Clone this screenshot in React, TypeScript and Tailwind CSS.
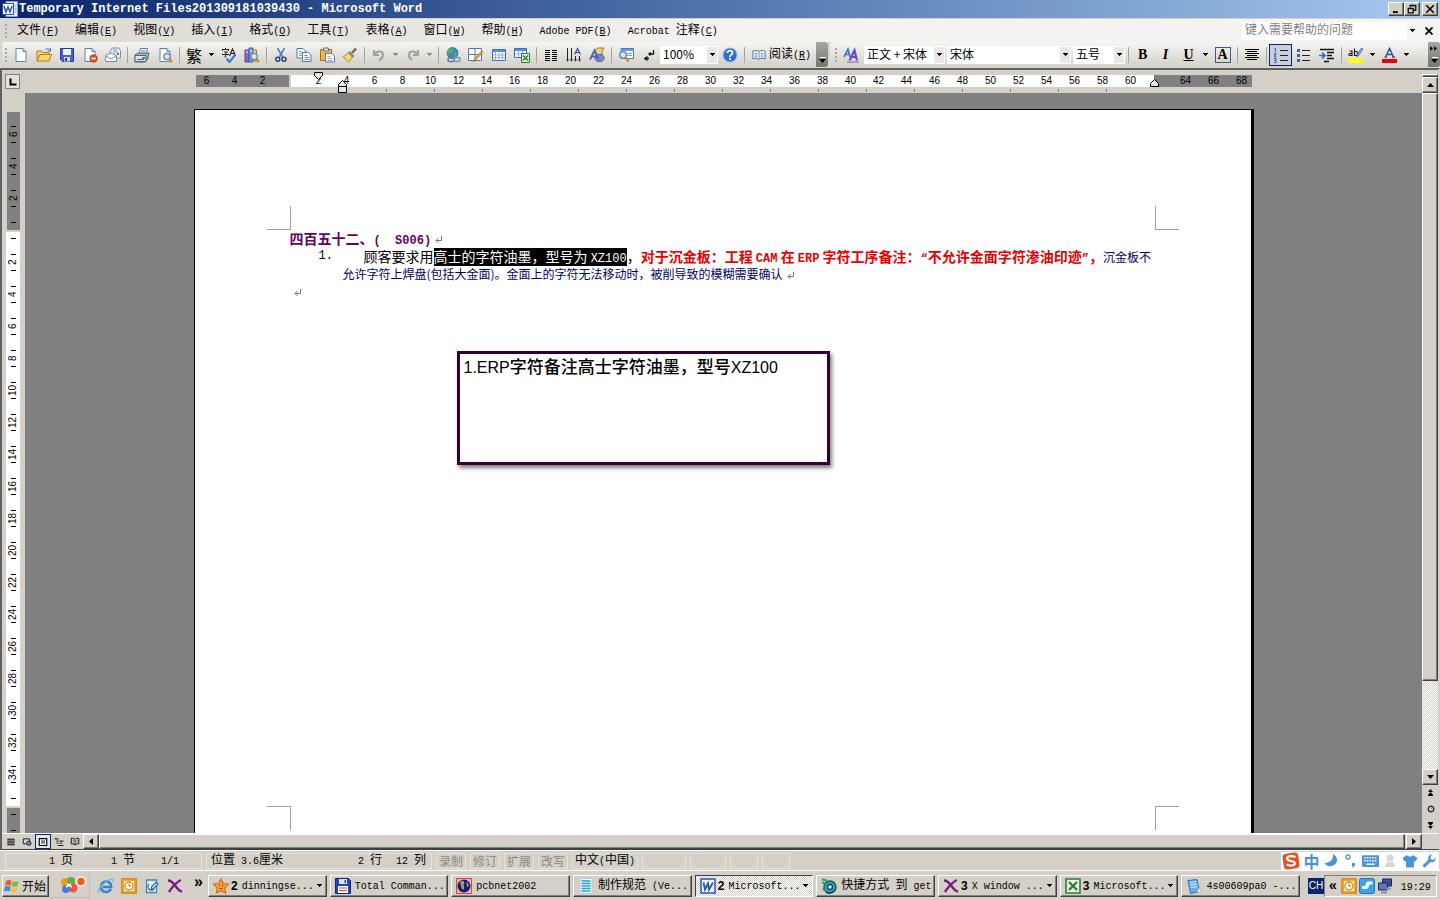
import { Fragment, type ReactNode } from "react";
import clsx from "clsx";

const song = "font-['Noto_Sans_CJK_SC',sans-serif]";
const raised =
  "border border-t-white border-l-white border-r-[#404040] border-b-[#404040] bg-[#d4d0c8] shadow-[inset_-1px_-1px_#808080]";
const dither = "bg-[repeating-conic-gradient(#fff_0_25%,#d4d0c8_0_50%)] bg-[length:2px_2px]";

// Latin runs are half the width of a full CJK glyph, so they get their own size.
function Mix({ children }: { children: string }) {
  return (
    <span>
      {children.split(/([ -~]+)/).map((part, i) =>
        i % 2 ? (
          <span key={i} className="whitespace-pre font-['Liberation_Mono',monospace] text-[10px]">
            {part}
          </span>
        ) : (
          <Fragment key={i}>{part}</Fragment>
        ),
      )}
    </span>
  );
}

function Key({ letter }: { letter: string }) {
  return (
    <span className="font-['Liberation_Mono',monospace] text-[10px]">
      (<u>{letter}</u>)
    </span>
  );
}

function Svg({ children, size = "size-4" }: { children: ReactNode; size?: string }) {
  return (
    <svg viewBox="0 0 16 16" className={clsx("shrink-0", size)} fill="none" aria-hidden="true">
      {children}
    </svg>
  );
}

function Caret({ color = "#000" }: { color?: string }) {
  return (
    <svg viewBox="0 0 5 3" className="h-[3px] w-[5px] shrink-0" shapeRendering="crispEdges" aria-hidden="true">
      <path d="M0 0h5v1h-1v1h-1v1h-1v-1h-1v-1h-1z" fill={color} />
    </svg>
  );
}

const sheet = <path d="M3 1.500h7l3 3v10H3z" fill="#fff" stroke="#5d7fb5" />;
const fold = <path d="M10 1.500v3h3" fill="#c5d6f0" stroke="#5d7fb5" />;
const glass = (
  <>
    <circle cx="10" cy="9.500" r="3.200" fill="#cfe6fa" stroke="#6a86a8" strokeWidth="1.300" />
    <path d="M12.300 12l2.700 3" stroke="#c98a2b" strokeWidth="2.200" />
  </>
);
const outlookClock = (
  <>
    <rect x=".8" y=".8" width="14.400" height="14.400" fill="#f7a823" stroke="#c9780c" />
    <rect x="3" y="3" width="10" height="10" fill="#fff4d8" />
    <circle cx="8" cy="8" r="4" fill="#fff" stroke="#d98b1a" strokeWidth="1.400" />
    <path d="M8 5.500V8h2" stroke="#a0600a" />
  </>
);
const bigX = (
  <path d="M1 2.500c3 0 5 2 7.500 5.500S13 13.500 15 13.500M14 2C11 3 4 10 2 14" stroke="#7b1a7e" strokeWidth="2.300" />
);

const icons: Record<string, ReactNode> = {
  new: <>{sheet}{fold}</>,
  open: (
    <>
      <path d="M1 14V4h5l1 1.500h6V8" fill="#f6d57a" stroke="#b07c18" />
      <path d="M1 14l3-6.500h11.500L13 14z" fill="#fbd768" stroke="#b07c18" />
      <path d="M9 3c2-2 4-1.500 5 .5M14.500 1v3h-3" stroke="#3f6fae" />
    </>
  ),
  save: (
    <>
      <path d="M1.500 1.500h13v13h-11l-2-2z" fill="#4a62c9" stroke="#2a3a92" />
      <path d="M4 2h8v6H4z" fill="#eef3fd" />
      <path d="M5 10h6v4.500H5z" fill="#cfd6e8" />
      <path d="M6 11h2v3H6z" fill="#2a3a92" />
    </>
  ),
  permission: (
    <>
      {sheet}
      {fold}
      <circle cx="11.500" cy="11.500" r="3.800" fill="#df4a22" stroke="#a82c0c" strokeWidth=".6" />
      <path d="M9.300 11.500h4.400" stroke="#fff" strokeWidth="1.600" />
    </>
  ),
  mail: (
    <>
      <path d="M5 5l2-4h7l1.500 3v7H5z" fill="#eaf2fc" stroke="#7b93b8" />
      <path d="M8 3h4M8 5h5" stroke="#7b93b8" />
      <path d="M.7 8.500L6 6l5.500 2.500v6H.7z" fill="#fff" stroke="#6f87ab" />
      <path d="M1 9l5 3 5-3" stroke="#6f87ab" />
      <path d="M12 6h2v2h-2z" fill="#d04a30" />
    </>
  ),
  print: (
    <>
      <path d="M5 7l1.500-5.500h7L12 7z" fill="#fff" stroke="#5f7b9e" />
      <path d="M7.500 3.500h4M7 5h4" stroke="#89a4c8" />
      <path d="M1 8l3-2h11l-1.500 6.500L11 15H1z" fill="#a9b6c9" stroke="#50627c" />
      <path d="M1 8.500h11v6H1z" fill="#dfe6ef" stroke="#50627c" />
      <path d="M3 12.500h7" stroke="#50627c" />
      <path d="M8 10h3v2H8z" fill="#2fb52a" />
    </>
  ),
  preview: <>{sheet}{fold}{glass}</>,
  spelling: (
    <>
      <path d="M1 2.500h7M4.500 1v2M1.500 2.500v1.500M7.500 2.500v1.500M3 5h3.500L4.500 6.500M1 7.500h7M4.700 6.500v3.500H3.500" stroke="#222" />
      <path d="M8.500 9l3-7 3 7M9.500 6.500h4" stroke="#222" strokeWidth="1.100" />
      <path d="M5.500 11.500l3 3.500 5.500-7" stroke="#3f7bd9" strokeWidth="2.200" />
    </>
  ),
  research: (
    <>
      <path d="M1 3h4v12H1z" fill="#8a6cc8" stroke="#5a4296" />
      <path d="M5 1h4v14H5z" fill="#6f9be0" stroke="#3f62a4" />
      <path d="M9 3h3.500v11H9z" fill="#f1cf6e" stroke="#a37c22" />
      <path d="M2 5h2M6 4h2" stroke="#fff" />
      {glass}
    </>
  ),
  cut: (
    <>
      <path d="M4.500 1l5 9M11.500 1l-5 9" stroke="#5b7fb8" strokeWidth="1.600" />
      <circle cx="4.800" cy="12.300" r="2" stroke="#24447e" strokeWidth="1.500" />
      <circle cx="11" cy="12.300" r="2" stroke="#24447e" strokeWidth="1.500" />
    </>
  ),
  copy: (
    <>
      <path d="M1 1.500h6l2.500 2.500v7H1z" fill="#fff" stroke="#4d74b8" />
      <path d="M3 4.500h3M3 6.500h4M3 8.500h3" stroke="#7fa0d4" />
      <path d="M6.500 5.500h6L15 8v6.500H6.500z" fill="#fff" stroke="#4d74b8" />
      <path d="M8.500 8.500h3M8.500 10.500h5M8.500 12.500h5" stroke="#5d87cc" />
    </>
  ),
  paste: (
    <>
      <path d="M1.500 2.500h11v11h-11z" fill="#f0b840" stroke="#a87214" />
      <path d="M4.500 1h5v3h-5z" fill="#d9dde5" stroke="#6a7384" />
      <path d="M6.500 6.500H13L15.500 9v6h-9z" fill="#fff" stroke="#5a78ab" />
      <path d="M8.500 9.500h3M8.500 11.500h5M8.500 13.500h5" stroke="#8fa9d4" />
    </>
  ),
  brush: (
    <>
      <path d="M10 6l4-4.500" stroke="#8c6a33" strokeWidth="2.600" />
      <path d="M7.500 4l5 5-2 1.500L6 5.500z" fill="#7d83a5" />
      <path d="M6 5.500l4.500 5L6.500 15 1 9.500c2-.5 4-2 5-4z" fill="#f5db70" stroke="#a88a28" />
    </>
  ),
  undo: <path d="M3 3v5h5M3.500 7.500C6 3.500 12 3.500 12 8c0 2.500-1.500 4-4 5.500" stroke="#a3a09a" strokeWidth="2.100" />,
  redo: <path d="M13 3v5H8M12.500 7.500C10 3.500 4 3.500 4 8c0 2.500 1.500 4 3 4.500" stroke="#a3a09a" strokeWidth="2.100" />,
  link: (
    <>
      <circle cx="7.500" cy="6" r="5.500" fill="#3f86d8" stroke="#245494" strokeWidth=".7" />
      <path d="M4 2c3-1 5 0 4 2s-4 1-4 4-2-1-2-3 1-2 2-3zM10 5c2 0 2 2 1 4s-2-3-1-4z" fill="#52b948" />
      <rect x="3" y="10.500" width="6.500" height="4" rx="2" stroke="#5b7697" strokeWidth="1.500" />
      <rect x="8.500" y="10.500" width="6.500" height="4" rx="2" stroke="#7d98b9" strokeWidth="1.500" />
    </>
  ),
  tableDraw: (
    <>
      <path d="M.5 1.500h13v12H.5zM.5 7.500h13M7 1.500v12" fill="#fff" stroke="#5874b6" />
      <path d="M15 5l-7 8-2 2 .5-3L13.500 4z" fill="#f2b13a" stroke="#946114" strokeWidth=".7" />
    </>
  ),
  table: (
    <>
      <path d="M1.500 2.500h13v11h-13z" fill="#fff" stroke="#3f6cbd" />
      <path d="M2 3h12v2H2z" fill="#5c8de0" />
      <path d="M2 8h12M2 10.700h12M4.500 5v8.500M8 5v8.500M11.300 5v8.500" stroke="#8fb0e6" />
    </>
  ),
  excelSheet: (
    <>
      <path d="M.5 1.500h12v9H.5z" fill="#fff" stroke="#3f6cbd" />
      <path d="M1 2h11v2H1z" fill="#5c8de0" />
      <path d="M1 7h11M4.500 4v6M8.500 4v6" stroke="#8fb0e6" />
      <path d="M7.500 6.500h8v9h-8z" fill="#e6f5e4" stroke="#2b7a2b" />
      <path d="M9 8.500l5 5M14 8.500l-5 5" stroke="#2b8a2b" strokeWidth="1.700" />
    </>
  ),
  columns: <path d="M2 3.500h5M2 5.500h5M2 7.500h5M2 9.500h5M2 11.500h5M2 13.500h5M9 3.500h5M9 5.500h5M9 7.500h5M9 9.500h5M9 11.500h5M9 13.500h5" stroke="#000" />,
  direction: (
    <>
      <path d="M1.500 1v13M5.500 1v13M9.500 9v5M13.500 9v5" stroke="#222" />
      <path d="M8.500 7.500l3-6 3 6M9.500 5.500h4" stroke="#333a9a" strokeWidth="1.100" />
      <path d="M0 12l1.500 2.500L3 12M4 12l1.500 2.500L7 12M8 12l1.500 2.500L11 12M12 12l1.500 2.500L15 12" stroke="#555" strokeWidth=".7" />
    </>
  ),
  drawing: (
    <>
      <path d="M6 3l3-2h6l-2 3v6l-3 2z" fill="#f0d27a" stroke="#9c7c2a" />
      <ellipse cx="10.500" cy="11" rx="4.500" ry="3.500" fill="#7c8cc8" stroke="#4a5896" />
      <path d="M1 12.500l4.500-9 4 9M2.500 9.500h6" stroke="#4f62c4" strokeWidth="2" />
    </>
  ),
  docMap: (
    <>
      <path d="M3 1.500h12.500v10H3z" fill="#fff" stroke="#4d77bd" />
      <path d="M3 2h12.500v2H3z" fill="#6f9be0" />
      <path d="M9 6.500h5M9 8.500h5" stroke="#6f9be0" />
      <circle cx="5" cy="8" r="3.300" fill="#cfe6fa" stroke="#5b7fae" strokeWidth="1.300" />
      <path d="M7.500 10.500l3 4" stroke="#c98a2b" strokeWidth="2.200" />
    </>
  ),
  marks: <path d="M12.500 3v4H8M9.500 5.500L8 7l1.500 1.500M3 11.500h5M6.500 9.500L4 11.500l2.500 2" stroke="#111" strokeWidth="1.300" />,
  help: (
    <>
      <circle cx="8" cy="8" r="7" fill="#2c6fd8" stroke="#8fb6ee" />
      <path d="M5.500 6c0-3.500 5.200-3 5 0-.2 1.700-2.500 1.800-2.500 4M8 11v2" stroke="#fff" strokeWidth="1.800" />
    </>
  ),
  read: (
    <>
      <path d="M8 4C6 2.500 3 2.500 1 3.500v9c2-1 5-1 7 .5 2-1.500 5-1.500 7-.5v-9c-2-1-5-1-7 .5z" fill="#eef4fc" stroke="#47678f" />
      <path d="M8 4v9M3 6h3M3 8h3M3 10h3M10 6h3M10 8h3M10 10h3" stroke="#6d8fbd" />
    </>
  ),
  styles: (
    <>
      <path d="M1 10l4-8 2 8M2.500 7.500h4" stroke="#3c7bc4" strokeWidth="1.700" />
      <path d="M6.500 13.500l5-10 2.500 10M8.500 10h5" stroke="#6a4cc0" strokeWidth="2.200" />
      <path d="M4 15h12" stroke="#7c5cd0" />
    </>
  ),
  center: <path d="M1 2.500h14M3 4.500h10M1 6.500h14M3 8.500h10M1 10.500h14M3 12.500h10" stroke="#000" />,
  numbered: (
    <>
      <path d="M7 3.500h8M7 8.500h8M7 13.500h8" stroke="#222" />
      <path d="M1.500 1.500h1v3.500M1 6.500h2v1.500H1.500v2h2M1 11.500h2v4H1M1.500 13.500H3" stroke="#3a5dae" />
    </>
  ),
  bullets: (
    <>
      <path d="M6 3.500h8M6 8.500h8M6 13.500h8" stroke="#222" />
      <path d="M1 2h3v3H1zM1 7h3v3H1zM1 12h3v3H1z" fill="#3a5dae" />
    </>
  ),
  indent: (
    <>
      <path d="M1 2.500h14M8 5.500h7M8 8.500h5M8 11.500h7M5 14.500h5" stroke="#111" strokeWidth="1.300" />
      <path d="M0 8.500h5M3 5.500l3 3-3 3" stroke="#2f65c4" strokeWidth="1.700" />
    </>
  ),
  highlight: (
    <>
      <path d="M1.500 4h2.500v4.500H2c-1.500 0-1.500-2 0-2h2M6.500 1.500v7h2c1.500-.5 1.500-4-.5-4H6.500" stroke="#111" strokeWidth="1.100" />
      <path d="M15 2l-4 6-2 2 .5-3L13 1.500z" fill="#8ab0ea" stroke="#3d5f9c" strokeWidth=".8" />
      <path d="M0 11.500h15V16H0z" fill="#ffff00" />
    </>
  ),
  fontColor: (
    <>
      <path d="M3.500 10l4-8.500 4 8.500M5 7.500h5M2.500 10h2.500M10 10h3" stroke="#30539c" strokeWidth="1.500" />
      <path d="M0 12h15v4H0z" fill="#f00000" />
    </>
  ),
  word: (
    <>
      <path d="M4 .5h11.500v15H4z" fill="#eaf1fc" stroke="#7f9fd6" />
      <path d="M.5 2.500h11v11H.5z" fill="#fff" stroke="#2a54ac" strokeWidth="1.200" />
      <path d="M2 5l2 6 2-5 2 5 2-6" stroke="#2a54ac" strokeWidth="1.500" />
      <path d="M13 5h1.500M13 8h1.500M13 11h1.500" stroke="#5d87cc" />
    </>
  ),
  wordTask: (
    <>
      <path d="M1 1h14v14H1z" fill="#eef4fd" stroke="#2a54ac" strokeWidth="1.500" />
      <path d="M3.500 4.500L5 11.500l3-6 1 6 4-7" stroke="#2a54ac" strokeWidth="1.800" />
    </>
  ),
  excel: (
    <>
      <path d="M1 1h14v14H1z" fill="#e9f6e6" stroke="#2d7d2d" strokeWidth="1.600" />
      <path d="M4 4l8 8M12 4l-8 8" stroke="#2d7d2d" strokeWidth="2.300" />
    </>
  ),
  windows: (
    <>
      <path d="M2 3c2-1.300 4-1 5.500-.2L6.800 7.500C5 6.700 3 6.700 1 7.700z" fill="#ef5a28" />
      <path d="M8.500 3.200c2 1 4 .8 6-.2l-1 5c-2 .9-4 .8-5.700 0z" fill="#7cbb3c" />
      <path d="M1 8.800c2-1 3.800-1 5.600-.2L6 13.300c-2-.9-4-.7-6 .3z" fill="#3c8ae0" />
      <path d="M7.700 9.200c2 .9 3.800.9 5.600 0l-.9 4.800c-2 1-3.600.8-5.400-.1z" fill="#f9c52a" />
    </>
  ),
  ie: (
    <>
      <path d="M13 11c-1 2-2.500 3-5 3-3 0-5-2-5-5s2-5.500 5-5.500 5.500 2 5.200 5.500H5" stroke="#2b84d4" strokeWidth="2.500" />
      <path d="M1 14.500C-1 12 6 4 11 2s4 0 3.500 2" stroke="#65b4ee" strokeWidth="1.300" />
    </>
  ),
  clock: outlookClock,
  note: (
    <>
      <path d="M2.500 2h10v12.500h-10z" fill="#dff0fc" stroke="#3f86bf" strokeWidth="1.300" />
      <path d="M5 6a3.500 3.500 0 1 0 5 5M12 4.500L7.500 9v2H9l5-5z" fill="#fff" stroke="#2a6ca8" strokeWidth="1.300" />
    </>
  ),
  x: bigX,
  star: (
    <>
      <path d="M8 .8l2.300 4.700 5.200.6-3.700 3.700.9 5.300L8 12.700l-4.700 2.400.9-5.300L.5 6.100l5.200-.6z" fill="#f9a73a" stroke="#d96c10" strokeWidth="1.200" strokeLinejoin="round" />
      <path d="M6.300 6.500v2M9.700 6.500v2M6 10c1 1 3 1 4 0" stroke="#a04808" />
    </>
  ),
  floppy: (
    <>
      <path d="M.5.500h13l2 2v13H.5z" fill="#2343c4" stroke="#14256e" />
      <path d="M4 1h8v5H4z" fill="#e3e6ee" />
      <path d="M9.500 2h1.500v3H9.500z" fill="#2343c4" />
      <path d="M3 8h10v7H3z" fill="#fff" />
      <path d="M4 10h8M4 12.500h8" stroke="#d8483c" />
    </>
  ),
  globe: (
    <>
      <path d="M.5.500h15v15H.5z" fill="#e8b8b0" stroke="#d84838" />
      <circle cx="8" cy="8" r="6.500" fill="#10188c" />
      <path d="M5 3c3-1 4 1 3 3s1 3 0 5-3-1-3-3-2-3 0-5zM11 4c2 1 2 4 1 5s-2-4-1-5z" fill="#a8a048" />
    </>
  ),
  list: (
    <>
      <path d="M2 .5h12v15H2z" fill="#f2fafd" stroke="#b8d0da" />
      <path d="M3.500 3h9M3.500 5.500h9M3.500 8h9M3.500 10.500h9M3.500 13h9" stroke="#22a0cc" strokeWidth="1.300" />
    </>
  ),
  gear: (
    <>
      <circle cx="9" cy="9" r="6" fill="#35b08c" stroke="#0c5a50" strokeWidth="1.400" />
      <circle cx="9" cy="9" r="2.500" fill="#d8f0e4" stroke="#1c3c94" strokeWidth="1.400" />
      <path d="M1 1.500l5 1M1 4l3 2M4 13l-2-3" stroke="#2a9c84" strokeWidth="2" />
      <path d="M5 14c2 2 6 1 8-1" stroke="#1c3c94" strokeWidth="1.600" />
    </>
  ),
  notepad: (
    <>
      <path d="M2 2.500l9-1 2.500 12-9 2z" fill="#5fb2ea" stroke="#2a74b4" />
      <path d="M3.500 4.500l7-1M4 7l7-1M4.500 9.500l7-1" stroke="#d4ecfc" />
      <path d="M11 15l3.500-1-1-6z" fill="#f2f6fa" stroke="#8aa0b4" strokeWidth=".6" />
    </>
  ),
  flash: (
    <>
      <rect x=".5" y=".5" width="15" height="15" rx="2" fill="#3aa4e4" stroke="#1d78b8" />
      <path d="M13.500 3.500H9c-2 0-2 3-3 4.500H3v3h4c3 0 2.500-3 3.500-4.500h3z" fill="#fff" />
    </>
  ),
  network: (
    <>
      <path d="M5.500 1h9v7h-9z" fill="#3f4e9c" stroke="#1c2458" />
      <path d="M1.500 5h9v7h-9z" fill="#5f74c8" stroke="#1c2458" />
      <path d="M4 14.500h6M9 10.500h5" stroke="#8a90a8" strokeWidth="2" />
    </>
  ),
};

function ToolButton({ name, label }: { name: string; label: string }) {
  return (
    <button type="button" aria-label={label} className="flex h-[22px] w-[23px] shrink-0 items-center justify-center">
      <Svg>{icons[name]}</Svg>
    </button>
  );
}

function DropArrow({ label, color }: { label: string; color?: string }) {
  return (
    <button type="button" aria-label={label} className="flex h-[22px] w-[11px] shrink-0 items-center justify-center">
      <Caret color={color} />
    </button>
  );
}

function Separator() {
  return (
    <div className="flex w-[6px] shrink-0 justify-center">
      <div className="h-4 w-px bg-[#a6a39c]" />
    </div>
  );
}

function Grip() {
  return (
    <div className="flex w-[9px] shrink-0 flex-col items-end gap-[2px] pr-[2px]">
      {[0, 1, 2, 3].map((i) => (
        <div key={i} className="size-[2px] bg-[#a8a59d]" />
      ))}
    </div>
  );
}

function Combo({ label, value, width }: { label: string; value: string; width: string }) {
  return (
    <div className={clsx("relative flex h-[18px] shrink-0 bg-white", width)}>
      <select aria-label={label} className="w-full appearance-none bg-transparent pb-[2px] pl-[3px] text-xs leading-4 outline-none">
        <option>{value}</option>
      </select>
      <span className="pointer-events-none absolute inset-y-px right-px flex w-[10px] items-center justify-center bg-[#e9e7e3]">
        <Caret />
      </span>
    </div>
  );
}

function BarEnd({ more }: { more?: boolean }) {
  return (
    <button
      type="button"
      aria-label="工具栏选项"
      className={clsx(
        "flex h-[25px] w-3 shrink-0 flex-col items-center gap-1 rounded-r-[3px] bg-linear-to-b from-[#a9a7a2] to-[#77756f] pb-[3px] text-white",
        more ? "justify-between pt-1" : "justify-end",
      )}
    >
      {more ? (
        <svg viewBox="0 0 8 5" className="h-[5px] w-2" fill="#111" aria-hidden="true">
          <path d="M0 0l3 2.500L0 5zM4 0l3 2.500L4 5z" />
        </svg>
      ) : null}
      <svg viewBox="0 0 7 7" className="size-[7px]" aria-hidden="true">
        <path d="M1 0h6v1H1z" fill="#fff" />
        <path d="M0 2h7L3.500 6z" fill="#000" />
      </svg>
    </button>
  );
}

const menus = [
  ["文件", "F"],
  ["编辑", "E"],
  ["视图", "V"],
  ["插入", "I"],
  ["格式", "O"],
  ["工具", "T"],
  ["表格", "A"],
  ["窗口", "W"],
  ["帮助", "H"],
  ["Adobe PDF", "B"],
  ["Acrobat 注释", "C"],
];

function TitleBar() {
  const button = clsx("flex h-[14px] w-4 items-center justify-center", raised);
  return (
    <header className="flex h-[18px] shrink-0 items-center bg-linear-to-r from-[#0a246a] to-[#a6caf0] pr-[2px] pl-[2px]">
      <Svg>{icons.word}</Svg>
      <h1 className="ml-px flex-1 font-['Liberation_Mono',monospace] text-xs leading-4 font-bold whitespace-nowrap text-white">
        Temporary Internet Files201309181039430 - Microsoft Word
      </h1>
      <button type="button" aria-label="最小化" className={button}>
        <Svg size="size-[10px]"><path d="M3 13h8" stroke="#000" strokeWidth="3" /></Svg>
      </button>
      <button type="button" aria-label="还原" className={button}>
        <Svg size="size-[10px]">
          <path d="M5 5V2h9v8h-3M5 2.500h9M2 7h8v7H2zM2 7.500h8" stroke="#000" strokeWidth="2" />
        </Svg>
      </button>
      <button type="button" aria-label="关闭" className={clsx("ml-[2px]", button)}>
        <Svg size="size-[10px]"><path d="M2 2l12 12M14 2L2 14" stroke="#000" strokeWidth="2.500" /></Svg>
      </button>
    </header>
  );
}

function MenuBar() {
  return (
    <nav className="flex h-6 shrink-0 items-center border-t border-[#d4d0c8] bg-linear-to-r from-[#dad7d0] via-[#f3f2ef] to-[#f5f4f2]">
      <Grip />
      {menus.map(([name, key]) => (
        <button key={name} type="button" className="px-2 leading-4 whitespace-nowrap">
          <Mix>{name}</Mix>
          <Key letter={key} />
        </button>
      ))}
      <div className="flex-1" />
      <input
        aria-label="键入需要帮助的问题"
        placeholder="键入需要帮助的问题"
        className="h-[18px] w-[165px] bg-white pb-1 pl-[3px] text-xs placeholder:text-[#808080]"
      />
      <span className="flex w-[11px] justify-center"><Caret /></span>
      <button type="button" aria-label="关闭窗口" className="flex w-[22px] justify-center">
        <Svg size="size-2"><path d="M1 1l14 14M15 1L1 15" stroke="#000" strokeWidth="3.500" /></Svg>
      </button>
    </nav>
  );
}

function Toolbars() {
  const serif = "flex h-[22px] w-[23px] shrink-0 items-center justify-center font-['Liberation_Serif',serif] text-sm font-bold";
  const bar = "flex h-[25px] items-center bg-linear-to-b from-[#f6f5f3] to-[#d3d0c8]";
  return (
    <div className="flex h-[26px] shrink-0 items-start bg-[#d9d6cf]">
      <div className={clsx("ml-[2px] rounded-l-[3px]", bar)}>
        <div className="-ml-[2px] flex"><Grip /></div>
        <ToolButton name="new" label="新建" />
        <ToolButton name="open" label="打开" />
        <ToolButton name="save" label="保存" />
        <ToolButton name="permission" label="权限" />
        <ToolButton name="mail" label="电子邮件" />
        <Separator />
        <ToolButton name="print" label="打印" />
        <ToolButton name="preview" label="打印预览" />
        <Separator />
        <button type="button" className="flex h-[22px] w-6 items-center justify-center text-base leading-4">繁</button>
        <DropArrow label="中文简繁转换" />
        <ToolButton name="spelling" label="拼写和语法" />
        <ToolButton name="research" label="信息检索" />
        <Separator />
        <ToolButton name="cut" label="剪切" />
        <ToolButton name="copy" label="复制" />
        <ToolButton name="paste" label="粘贴" />
        <ToolButton name="brush" label="格式刷" />
        <Separator />
        <ToolButton name="undo" label="撤消" />
        <DropArrow label="撤消列表" color="#8c8a84" />
        <ToolButton name="redo" label="恢复" />
        <DropArrow label="恢复列表" color="#8c8a84" />
        <Separator />
        <ToolButton name="link" label="超链接" />
        <ToolButton name="tableDraw" label="表格和边框" />
        <ToolButton name="table" label="插入表格" />
        <ToolButton name="excelSheet" label="插入 Excel 表格" />
        <Separator />
        <ToolButton name="columns" label="分栏" />
        <ToolButton name="direction" label="更改文字方向" />
        <ToolButton name="drawing" label="绘图" />
        <Separator />
        <ToolButton name="docMap" label="文档结构图" />
        <ToolButton name="marks" label="显示/隐藏编辑标记" />
        <Combo label="显示比例" value="100%" width="w-[58px]" />
        <ToolButton name="help" label="帮助" />
        <Separator />
        <button type="button" className="flex h-[22px] items-center gap-[3px] px-[5px] whitespace-nowrap">
          <Svg size="size-[14px]">{icons.read}</Svg>
          <span className="leading-4">阅读<Key letter="R" /></span>
        </button>
        <BarEnd />
      </div>
      <div className={clsx("ml-[2px] flex-1 rounded-l-[3px]", bar)}>
        <Grip />
        <ToolButton name="styles" label="格式窗格" />
        <div className="ml-[2px] flex gap-[2px]">
          <Combo label="样式" value="正文 + 宋体" width="w-[81px]" />
          <Combo label="字体" value="宋体" width="w-[124px]" />
          <Combo label="字号" value="五号" width="w-[52px]" />
        </div>
        <Separator />
        <button type="button" aria-label="加粗" className={serif}>B</button>
        <button type="button" aria-label="倾斜" className={clsx("italic", serif)}>I</button>
        <button type="button" aria-label="下划线" className={clsx("underline", serif)}>U</button>
        <DropArrow label="下划线样式" />
        <button type="button" aria-label="字符边框" className={serif}>
          <span className="size-4 border border-[#3c5a8c] text-center leading-[14px]">A</span>
        </button>
        <Separator />
        <ToolButton name="center" label="居中" />
        <Separator />
        <button type="button" aria-label="编号" className="flex h-[22px] w-[23px] shrink-0 items-center justify-center border border-[#0a246a] bg-[#c9cfdd]">
          <Svg>{icons.numbered}</Svg>
        </button>
        <ToolButton name="bullets" label="项目符号" />
        <ToolButton name="indent" label="增加缩进量" />
        <Separator />
        <ToolButton name="highlight" label="突出显示" />
        <DropArrow label="突出显示颜色" />
        <ToolButton name="fontColor" label="字体颜色" />
        <DropArrow label="字体颜色列表" />
        <div className="flex-1" />
        <BarEnd more />
      </div>
    </div>
  );
}

const evens = (from: number, to: number) =>
  Array.from({ length: (to - from) / 2 + 1 }, (_, i) => from + i * 2);

function RulerNumbers({ values }: { values: number[] }) {
  return (
    <>
      {values.map((n) => (
        <span key={n} className="w-7 shrink-0 text-center">{n}</span>
      ))}
    </>
  );
}

function HorizontalRuler() {
  return (
    <div className="flex h-[23px] shrink-0 bg-[#d4d0c8]">
      <div className="w-[23px] pt-1 pl-[3px]">
        <button type="button" aria-label="左对齐式制表符" className="flex size-[15px] items-center justify-center border border-[#808080] bg-[#e4e1da]">
          <Svg size="size-2"><path d="M3 1v12h12" stroke="#000" strokeWidth="4" /></Svg>
        </button>
      </div>
      <div className="flex-1 pt-[5px]">
        <div className="relative mx-auto w-[1056px] font-['Liberation_Sans',sans-serif] text-[10px] leading-3">
          <div className="flex h-3 overflow-hidden">
            <div className="flex w-[93px] shrink-0 justify-end bg-[#808080] pr-3">
              <RulerNumbers values={[6, 4, 2]} />
            </div>
            <div className="ml-[2px] flex w-[863px] shrink-0 bg-white pl-[14px]">
              <RulerNumbers values={evens(2, 60)} />
            </div>
            <div className="flex min-w-0 flex-1 bg-[#808080] pl-[18px]">
              <RulerNumbers values={[64, 66, 68]} />
            </div>
          </div>
          <div className="mt-[2px] flex gap-[47px] pl-[190px]">
            {evens(2, 32).map((n) => (
              <div key={n} className="h-[3px] w-px bg-[#808080]" />
            ))}
          </div>
          <svg viewBox="0 0 9 8" className="absolute -top-[3px] left-[118px] h-2 w-[9px]" fill="#e8e6e0" stroke="#000">
            <path d="M.5.500h8v3l-4 4-4-4z" />
          </svg>
          <svg viewBox="0 0 10 13" className="absolute top-[5px] left-[142px] h-[13px] w-[10px]" fill="#e8e6e0" stroke="#000">
            <path d="M.5 12.500v-8l4-4 4 4v8zM.5 6.500h8" />
          </svg>
          <svg viewBox="0 0 9 8" className="absolute top-1 left-[954px] h-2 w-[9px]" fill="#e8e6e0" stroke="#000">
            <path d="M.5 7.500v-3l4-4 4 4v3z" />
          </svg>
        </div>
      </div>
      <div className="flex w-4 flex-col pt-1">
        <div className={clsx("h-[3px]", raised)} />
        <button type="button" aria-label="向上滚动" className={clsx("flex flex-1 items-center justify-center", raised)}>
          <svg viewBox="0 0 7 4" className="h-1 w-[7px]"><path d="M0 4L3.500 0 7 4z" /></svg>
        </button>
      </div>
    </div>
  );
}

function Tick() {
  return <div className="h-px w-[5px] shrink-0 bg-black" />;
}

function VerticalNumbers({ values }: { values: number[] }) {
  return (
    <>
      {values.map((n) => (
        <div key={n} className="flex h-8 shrink-0 flex-col items-center justify-center">
          <Tick />
          <span className="flex h-[15px] rotate-180 items-center justify-center leading-3 [writing-mode:vertical-rl]">{n}</span>
          <Tick />
        </div>
      ))}
    </>
  );
}

function VerticalRuler() {
  return (
    <div className="flex w-[23px] shrink-0 flex-col overflow-hidden bg-[#d4d0c8] pt-[19px] pl-1 font-['Liberation_Sans',sans-serif] text-[10px]">
      <div className="ml-px flex h-[118px] w-[13px] shrink-0 flex-col items-center bg-[#808080] pt-[6px]">
        <VerticalNumbers values={[6, 4, 2]} />
        <div className="mt-2"><Tick /></div>
      </div>
      <div className="mt-[2px] flex h-[574px] w-[14px] shrink-0 flex-col items-center bg-white pt-[6px]">
        <Tick />
        <div className="mt-[7px]"><VerticalNumbers values={evens(2, 34)} /></div>
        <div className="mt-2"><Tick /></div>
      </div>
      <div className="mt-[2px] ml-px flex w-[13px] flex-1 flex-col items-center gap-[15px] bg-[#808080] pt-[6px]">
        <Tick />
        <Tick />
      </div>
    </div>
  );
}

function ReturnMark() {
  return (
    <svg viewBox="0 0 8 8" className="ml-1 inline size-2 align-middle" fill="none" stroke="#777" aria-hidden="true">
      <path d="M6.500 0v4.500H1M3.500 2L1 4.500 3.500 7" />
    </svg>
  );
}

const half = "whitespace-pre font-['Liberation_Mono',monospace] text-xs leading-none";

function Document() {
  const corner = "size-6 border-[#a0a0a0]";
  return (
    <article className="mx-auto mt-4 flex w-[1060px] flex-1 flex-col border-t border-r-[3px] border-l border-black bg-white text-black">
      <div className="mt-24 flex justify-between px-[72px]">
        <div className={clsx("border-r border-b", corner)} />
        <div className={clsx("border-b border-l", corner)} />
      </div>
      <div className="flex-1 px-[95px] text-sm leading-4 whitespace-nowrap">
        <h2 className="h-[18px] font-bold text-[#660066]">
          四百五十二、<span className={half}>(  S006)</span>
          <ReturnMark />
        </h2>
        <div className="flex h-[18px] pl-[29px]">
          <span className={clsx("w-[45px] leading-4!", half)}>1.</span>
          <p>
            顾客要求用
            <mark className="inline-block h-[18px] bg-black align-top text-white">
              高士的字符油墨，型号为 <span className={half}>XZ100</span>
            </mark>
            ，
            <strong className="text-[#e60000]">
              对于沉金板：工程 <span className={half}>CAM</span> 在 <span className={half}>ERP</span> 字符工序备注：
              <span className={half}>“</span>不允许金面字符渗油印迹<span className={half}>”</span>，
            </strong>
            <span className="text-xs text-[#000066]">沉金板不</span>
          </p>
        </div>
        <p className="h-[17px] pl-[53px] text-xs leading-4 text-[#000066]">
          允许字符上焊盘(包括大金面)。金面上的字符无法移动时，被削导致的模糊需要确认
          <ReturnMark />
        </p>
        <p className="h-[18px]"><ReturnMark /></p>
        <div className="mt-[50px] ml-[167px] h-[114px] w-[373px] border-[3px] border-[#330033] bg-white px-1 text-[17px] leading-6 font-medium shadow-[2px_3px_4px_#00000080]">
          <span className="font-['Liberation_Sans',sans-serif] text-base">1.ERP</span>
          字符备注高士字符油墨，型号
          <span className="font-['Liberation_Sans',sans-serif] text-base">XZ100</span>
        </div>
      </div>
      <div className="mb-[3px] flex justify-between px-[72px]">
        <div className={clsx("border-t border-r", corner)} />
        <div className={clsx("border-t border-l", corner)} />
      </div>
    </article>
  );
}

function VerticalScroll() {
  return (
    <div className="flex w-4 shrink-0 flex-col bg-[#d4d0c8]">
      <div className={clsx("flex flex-1 flex-col", dither)}>
        <div className={clsx("h-[87%]", raised)} />
      </div>
      <button type="button" aria-label="向下滚动" className={clsx("flex size-4 items-center justify-center", raised)}>
        <svg viewBox="0 0 7 4" className="h-1 w-[7px]"><path d="M0 0h7L3.500 4z" /></svg>
      </button>
      <div className="flex h-12 flex-col items-center justify-around pl-px">
        <svg viewBox="0 0 5 7" className="h-[7px] w-[5px]"><path d="M0 3L2.500 0 5 3zM0 6L2.500 3 5 6zM0 6h5v1H0z" /></svg>
        <svg viewBox="0 0 8 8" className="size-2" fill="#b8b6b0" stroke="#000"><circle cx="4" cy="4" r="3" /></svg>
        <svg viewBox="0 0 5 7" className="h-[7px] w-[5px]"><path d="M0 0h5v1H0zM0 1l2.500 3L5 1zM0 4l2.500 3L5 4z" /></svg>
      </div>
    </div>
  );
}

const views: [string, ReactNode][] = [
  ["普通视图", <path d="M2 3.500h12M2 6.500h12M2 9.500h12M2 12.500h12" stroke="#000" strokeWidth="1.600" />],
  ["Web 版式视图", <><path d="M2 3h10v8H2z" stroke="#222" strokeWidth="1.600" /><circle cx="11" cy="10" r="3.500" fill="#6c88b8" stroke="#000" /></>],
  ["页面视图", <><path d="M2 2.500h12v11H2z" fill="#fff" stroke="#000" strokeWidth="1.800" /><path d="M5 6.500h6M5 9.500h6" stroke="#000" strokeWidth="1.500" /></>],
  ["大纲视图", <path d="M1 3h6M4 6.500h3M9 6.500h6M4 10h3M9 10h4M6 13.500h9" stroke="#222" strokeWidth="1.800" />],
  ["阅读版式", <path d="M8 4L6 2H2v9h4l2 2 2-2h4V2h-4zM8 4v9M4 5h2M4 8h2M10 5h2M10 8h2" fill="#fff" stroke="#000" strokeWidth="1.500" />],
];

function HorizontalScroll() {
  return (
    <div className="flex h-4 shrink-0 border-t border-white bg-[#d4d0c8] pl-px">
      {views.map(([label, icon]) => (
        <button
          key={label}
          type="button"
          aria-label={label}
          className={clsx(
            "flex w-4 items-center justify-center",
            label === "页面视图" && "border border-[#0a246a] bg-[#e4e6ec]",
          )}
        >
          <Svg size="size-[10px]">{icon}</Svg>
        </button>
      ))}
      <button type="button" aria-label="向左滚动" className={clsx("flex w-4 items-center justify-center", raised)}>
        <svg viewBox="0 0 4 7" className="h-[7px] w-1"><path d="M4 0v7L0 3.500z" /></svg>
      </button>
      <div className={clsx("flex-1", raised)} />
      <button type="button" aria-label="向右滚动" className={clsx("ml-px flex w-4 items-center justify-center", raised)}>
        <svg viewBox="0 0 4 7" className="h-[7px] w-1"><path d="M0 0v7l4-3.500z" /></svg>
      </button>
      <div className="w-4" />
    </div>
  );
}

function StatusBar() {
  const panel = "flex h-4 shrink-0 items-center border border-[#e6e3dc] leading-4 whitespace-nowrap";
  return (
    <footer className="flex h-5 shrink-0 items-center gap-1 border-t border-white bg-[#d4d0c8] pl-[5px]">
      <div className={clsx("w-[197px] pl-[43px]", panel)}>
        <span className="w-[62px]"><Mix>1 页</Mix></span>
        <span className="w-[50px]"><Mix>1 节</Mix></span>
        <Mix>1/1</Mix>
      </div>
      <div className={clsx("w-[226px] pl-1", panel)}>
        <span className="w-[147px]"><Mix>位置 3.6厘米</Mix></span>
        <span className="w-[38px]"><Mix>2 行</Mix></span>
        <Mix>12 列</Mix>
      </div>
      {["录制", "修订", "扩展", "改写"].map((mode) => (
        <div key={mode} className={clsx("w-[30px] justify-center text-[#8c8a85]", panel)}>{mode}</div>
      ))}
      <div className={clsx("w-[66px] pl-[2px]", panel)}><Mix>中文(中国)</Mix></div>
      <div className={clsx("w-11", panel)} />
      <div className={clsx("w-9", panel)} />
      <div className={clsx("w-7", panel)} />
      <div className={clsx("w-7", panel)} />
      <div className="flex-1" />
      <div className="flex h-5 w-[160px] items-center justify-between border border-[#c4d8ec] bg-white pr-[2px] pl-px text-[#4c94d8]">
        <Svg size="size-[18px]">
          <rect x="1" y="1" width="14" height="14" rx="3" fill="#e8501c" transform="rotate(-8 8 8)" />
          <path d="M12 4.500C9 3 4.500 3.500 4.500 6s7 1.500 7 4-5 2.500-7.500 1" stroke="#fff" strokeWidth="2" />
        </Svg>
        <span className="text-base leading-4 font-bold">中</span>
        <Svg><path d="M10 1c1 5-3 9-8.500 9C5 16 15 13 14 6c-.3-2-2-4-4-5z" fill="currentColor" /></Svg>
        <Svg>
          <circle cx="6" cy="4" r="2" stroke="currentColor" strokeWidth="1.300" />
          <path d="M10 10h3v2.500L10.500 15v-2H10z" fill="currentColor" />
        </Svg>
        <Svg size="size-[17px]">
          <rect x="0" y="3" width="16" height="11" rx="1" fill="currentColor" />
          <path d="M2 5.500h12M2 8.300h12" stroke="#fff" strokeWidth="1.400" strokeDasharray="1.500 1" />
          <path d="M4 11.500h8" stroke="#fff" strokeWidth="1.300" />
        </Svg>
        <Svg>
          <circle cx="8" cy="5" r="3.500" fill="#d6d6d6" />
          <path d="M3 14c0-7 10-7 10 0z" fill="#d6d6d6" />
        </Svg>
        <Svg><path d="M5 2c1 2 5 2 6 0l4.500 3-2 3.500L12 8v6.500H4V8l-1.500.5-2-3.500z" fill="currentColor" /></Svg>
        <Svg><path d="M11 1.500c-3 0-4.500 2.500-3.500 5L1.500 12.500 3.500 14.800 9.500 9c3 1 5.500-1 5-4l-2.500 2-2-.7-.5-2z" fill="currentColor" /></Svg>
      </div>
    </footer>
  );
}

const tasks = [
  { icon: "star", count: 2, title: "dinningse..." },
  { icon: "floppy", title: "Total Comman..." },
  { icon: "globe", title: "pcbnet2002" },
  { icon: "list", title: "制作规范 (Ve..." },
  { icon: "wordTask", count: 2, title: "Microsoft...", active: true },
  { icon: "gear", title: "快捷方式 到 get" },
  { icon: "x", count: 3, title: "X window ..." },
  { icon: "excel", count: 3, title: "Microsoft..." },
  { icon: "notepad", title: "4s00609pa0 -..." },
];

function Taskbar() {
  return (
    <div className="flex h-[30px] shrink-0 items-center border-t border-white bg-[#d4d0c8] pl-[2px]">
      <button type="button" className={clsx("flex h-[22px] w-[47px] shrink-0 items-center gap-[2px] pl-px leading-4 whitespace-nowrap", raised)}>
        <Svg>{icons.windows}</Svg>
        开始
      </button>
      <button type="button" aria-label="Office" className="flex h-6 w-[41px] shrink-0 items-center justify-center border-r border-b border-[#c0bdb5] pl-2">
        <svg viewBox="0 0 28 18" className="h-[18px] w-7" aria-hidden="true">
          <circle cx="6" cy="6" r="4" fill="#e8a020" />
          <circle cx="12" cy="5" r="4" fill="#5cb040" />
          <circle cx="7" cy="13" r="4" fill="#3c80d8" />
          <circle cx="14" cy="12" r="4.500" fill="#e05848" />
          <path d="M8 8l5 3M12 8l-5 3" stroke="#fff" strokeWidth="1.500" />
          <circle cx="22" cy="5.500" r="5" fill="#fff" />
          <circle cx="22" cy="5.500" r="3.800" fill="#e8601c" />
        </svg>
      </button>
      <div className="ml-1 flex w-[114px] shrink-0 items-center">
        <ToolButton name="ie" label="Internet Explorer" />
        <ToolButton name="clock" label="Outlook" />
        <ToolButton name="note" label="便笺" />
        <ToolButton name="x" label="X" />
        <span className="pb-2 pl-2 font-['Liberation_Sans',sans-serif] text-base leading-4 font-bold">»</span>
      </div>
      <div className="flex min-w-0 flex-1 gap-[3px]">
        {tasks.map((task) => (
          <button
            key={task.icon}
            type="button"
            className={clsx(
              "flex h-[22px] min-w-0 flex-1 items-center overflow-hidden pr-1 pl-1 text-left leading-4",
              task.active
                ? clsx("border border-t-[#404040] border-r-white border-b-white border-l-[#404040]", dither)
                : raised,
            )}
          >
            <Svg>{icons[task.icon]}</Svg>
            {task.count ? (
              <b className="ml-[2px] font-['Liberation_Sans',sans-serif]">{task.count}</b>
            ) : null}
            <span className="ml-1 flex-1 whitespace-nowrap"><Mix>{task.title}</Mix></span>
            {task.count ? <Caret /> : null}
          </button>
        ))}
      </div>
      <span className="ml-2 h-4 w-4 shrink-0 bg-[#0a246a] text-center font-['Liberation_Sans',sans-serif] text-[10px] leading-4 text-white">CH</span>
      <div className="mr-[3px] flex h-[22px] w-[113px] shrink-0 items-center border border-t-[#808080] border-r-white border-b-white border-l-[#808080] pl-1">
        <span className="mr-1 pb-px font-['Liberation_Sans',sans-serif] text-sm leading-4 font-bold">«</span>
        <Svg>{icons.clock}</Svg>
        <span className="mx-[2px] flex"><Svg>{icons.flash}</Svg></span>
        <Svg>{icons.network}</Svg>
        <time className="ml-2"><Mix>19:29</Mix></time>
      </div>
    </div>
  );
}

export default function App() {
  return (
    <div className={clsx("flex h-screen flex-col overflow-hidden bg-[#d4d0c8] text-xs text-black", song)}>
      <TitleBar />
      <MenuBar />
      <Toolbars />
      <main className="flex min-h-0 flex-1 flex-col border-t-2 border-r-2 border-b border-l-2 border-t-[#606060] border-r-[#d4d0c8] border-b-[#404040] border-l-[#606060]">
        <HorizontalRuler />
        <div className="flex min-h-0 flex-1">
          <VerticalRuler />
          <div className="flex min-w-0 flex-1 flex-col overflow-hidden bg-[#808080]">
            <Document />
          </div>
          <VerticalScroll />
        </div>
        <HorizontalScroll />
      </main>
      <StatusBar />
      <Taskbar />
    </div>
  );
}
